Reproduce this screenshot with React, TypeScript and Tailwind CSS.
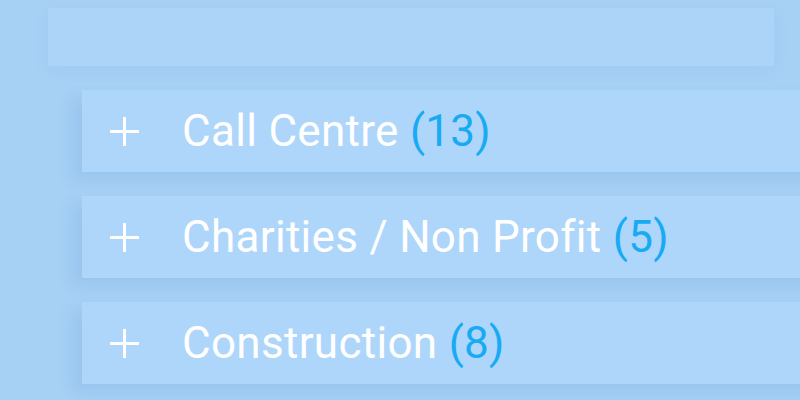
import React from 'react'

type Category = {
  name: string
  count: number
}

const categories: Category[] = [
  { name: 'Call Centre', count: 13 },
  { name: 'Charities / Non Profit', count: 5 },
  { name: 'Construction', count: 8 },
]

const PlusIcon = () => (
  <svg width="29" height="29" viewBox="0 0 29 29" className="shrink-0">
    <rect x="0" y="13" width="29" height="3" fill="#ffffff" />
    <rect x="13" y="0" width="3" height="29" fill="#ffffff" />
  </svg>
)

const App = () => {
  return (
    <div
      className="w-[800px] h-[400px] overflow-hidden bg-[#a7d0f5] relative"
      style={{ fontFamily: 'Roboto, "Liberation Sans", sans-serif' }}
    >
      {/* the row above, cut off at the top */}
      <div className="absolute left-[48px] right-[26px] top-[8px] h-[58px] bg-[#abd4f8] shadow-[0_4px_16px_rgba(60,120,190,0.06)]" />

      <div className="relative flex flex-col gap-[24px] pl-[82px] pt-[90px]">
        {categories.map((c) => (
          <div
            key={c.name}
            className="h-[82px] w-[760px] flex items-center bg-[#aed6fa] shadow-[-10px_8px_14px_rgba(60,120,190,0.12)]"
          >
            <div className="pl-[28px] pr-[43px] flex items-center">
              <PlusIcon />
            </div>
            <span className="text-[44px] leading-none text-white tracking-[0.3px]">
              {c.name} <span className="text-[#18abf4]">({c.count})</span>
            </span>
          </div>
        ))}
      </div>
    </div>
  )
}

export default App
